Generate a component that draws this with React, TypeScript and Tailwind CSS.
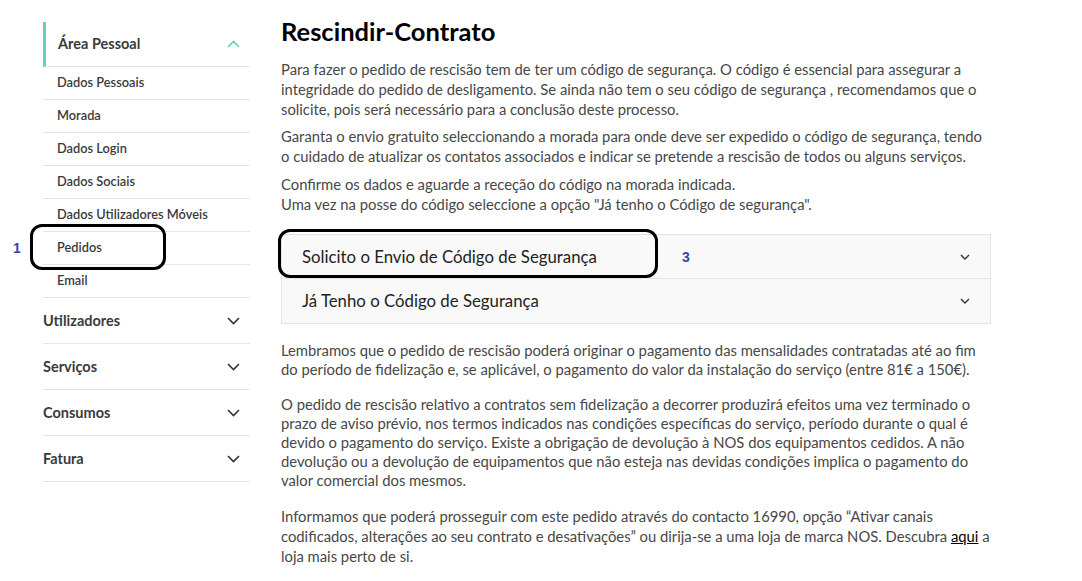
import React from "react"

const subItems = [
  "Dados Pessoais",
  "Morada",
  "Dados Login",
  "Dados Sociais",
  "Dados Utilizadores Móveis",
  "Pedidos",
  "Email",
]

const sections = ["Utilizadores", "Serviços", "Consumos", "Fatura"]

const Chevron = ({ up = false, className = "" }: { up?: boolean; className?: string }) => (
  <svg width="13" height="8" viewBox="0 0 13 8" className={className} fill="none">
    <path
      d={up ? "M1 7 L6.5 1.5 L12 7" : "M1 1 L6.5 6.5 L12 1"}
      stroke="currentColor"
      strokeWidth="1.6"
    />
  </svg>
)

const SmallChevron = () => (
  <svg width="10" height="6" viewBox="0 0 10 6" fill="none" className="text-[#333]">
    <path d="M1 1 L5 5 L9 1" stroke="currentColor" strokeWidth="1.4" />
  </svg>
)

const Sidebar = () => (
  <aside className="w-[207px] ml-[43px] mt-[22px] shrink-0 text-[#3a3a3a]">
    {/* open section */}
    <div className="flex items-center justify-between h-[45px] border-l-[3px] border-[#5fd3b9] pl-[12px] pr-[10px] border-b border-b-[#e6e6e6]">
      <span className="text-[14.5px] font-bold">Área Pessoal</span>
      <Chevron up className="text-[#5fd3b9]" />
    </div>
    {subItems.map((item) => (
      <div
        key={item}
        className="relative flex items-center h-[33px] pl-[14px] border-b border-[#e6e6e6] text-[12.8px] font-semibold"
      >
        {item}
        {item === "Pedidos" && (
          <>
            <div className="absolute left-[-13px] top-[-8px] w-[136px] h-[46px] border-[3px] border-black rounded-[12px]" />
            <span className="absolute left-[-30px] top-[6px] text-[14px] font-bold text-[#3346b0] font-['Liberation_Sans',sans-serif]">
              1
            </span>
          </>
        )}
      </div>
    ))}
    {sections.map((s) => (
      <div
        key={s}
        className="flex items-center justify-between h-[46px] border-b border-[#e6e6e6] pr-[10px]"
      >
        <span className="text-[14.5px] font-bold">{s}</span>
        <Chevron className="text-[#333]" />
      </div>
    ))}
  </aside>
)

const AccordionRow = ({ title, marked = false }: { title: string; marked?: boolean }) => (
  <div className="relative flex items-center justify-between h-[44px] pl-[20px] pr-[20px] bg-[#f9f9f9]">
    <span className="text-[16.8px] text-[#222]">{title}</span>
    <SmallChevron />
    {marked && (
      <>
        <div className="absolute left-[-4px] top-[-6px] w-[380px] h-[49px] border-[3px] border-black rounded-[12px]" />
        <span className="absolute left-[400px] top-[12px] text-[14px] font-bold text-[#3346b0] font-['Liberation_Sans',sans-serif]">
          3
        </span>
      </>
    )}
  </div>
)

export default function App() {
  return (
    <div className="flex bg-white min-h-[581px] w-[1082px] font-['Lato',sans-serif]">
      <Sidebar />

      <main className="ml-[31px] w-[712px] pt-[15px] text-[14.8px] leading-[20px] text-[#474747]">
        <h1 className="text-[25.5px] leading-[32px] font-bold text-black mb-[12px]">Rescindir-Contrato</h1>

        <p className="mb-[7px]">
          Para fazer o pedido de rescisão tem de ter um código de segurança. O código é essencial para assegurar a
          integridade do pedido de desligamento. Se ainda não tem o seu código de segurança , recomendamos que o
          solicite, pois será necessário para a conclusão deste processo.
        </p>
        <p className="mb-[8px]">
          Garanta o envio gratuito seleccionando a morada para onde deve ser expedido o código de segurança, tendo
          o cuidado de atualizar os contatos associados e indicar se pretende a rescisão de todos ou alguns serviços.
        </p>
        <p>
          Confirme os dados e aguarde a receção do código na morada indicada.
          <br />
          Uma vez na posse do código seleccione a opção "Já tenho o Código de segurança".
        </p>

        <div className="mt-[20px] w-[710px] border border-[#e4e4e4] divide-y divide-[#e4e4e4]">
          <AccordionRow title="Solicito o Envio de Código de Segurança" marked />
          <AccordionRow title="Já Tenho o Código de Segurança" />
        </div>

        <div className="mt-[17px] leading-[19px]">
          <p className="mb-[16px]">
            Lembramos que o pedido de rescisão poderá originar o pagamento das mensalidades contratadas até ao fim
            do período de fidelização e, se aplicável, o pagamento do valor da instalação do serviço (entre 81€ a 150€).
          </p>
          <p className="mb-[16px]">
            O pedido de rescisão relativo a contratos sem fidelização a decorrer produzirá efeitos uma vez terminado o
            prazo de aviso prévio, nos termos indicados nas condições específicas do serviço, período durante o qual é
            devido o pagamento do serviço. Existe a obrigação de devolução à NOS dos equipamentos cedidos. A não
            devolução ou a devolução de equipamentos que não esteja nas devidas condições implica o pagamento do
            valor comercial dos mesmos.
          </p>
          <p className="leading-[20px]">
            Informamos que poderá prosseguir com este pedido através do contacto 16990, opção “Ativar canais
            codificados, alterações ao seu contrato e desativações” ou dirija-se a uma loja de marca NOS. Descubra{" "}
            <a className="underline text-black">aqui</a> a loja mais perto de si.
          </p>
        </div>
      </main>
    </div>
  )
}
